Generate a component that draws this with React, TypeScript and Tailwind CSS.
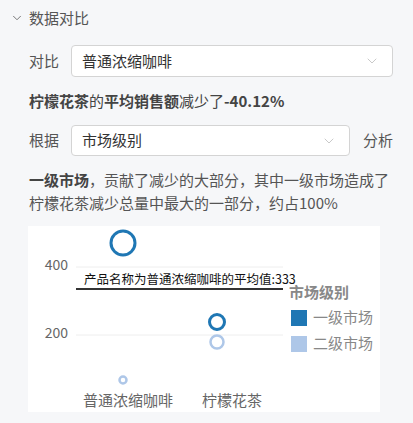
import { ChevronDown } from 'lucide-react';

const DARK = '#1f77b4';
const LIGHT = '#aec7e8';

function Select({ value, className }: { value: string; className: string }) {
  return (
    <div
      className={`flex items-center justify-between rounded-[4px] border border-[#d4d4d4] bg-white pl-[10px] pr-[12px] ${className}`}
    >
      <span className="text-[15px] text-[#333]">{value}</span>
      <ChevronDown size={16} strokeWidth={1.2} className="text-[#bbb]" />
    </div>
  );
}

function Chart() {
  return (
    <div className="ml-[-1px] mt-[12px] h-[186px] w-[352px] bg-white">
      <svg width="352" height="186" className="block">
        <g fontSize="14" fill="#666" textAnchor="end">
          <text x="40" y="44">400</text>
          <text x="40" y="112">200</text>
        </g>
        <line x1="48" x2="255" y1="41" y2="41" stroke="#eee" />
        <line x1="48" x2="255" y1="109" y2="109" stroke="#eee" />

        <circle cx="95" cy="17" r="12" fill="none" stroke={DARK} strokeWidth="3" />
        <circle cx="95" cy="154" r="3.5" fill="none" stroke={LIGHT} strokeWidth="2.5" />
        <circle cx="189" cy="96" r="7.5" fill="none" stroke={DARK} strokeWidth="3" />
        <circle cx="189" cy="116" r="6.5" fill="none" stroke={LIGHT} strokeWidth="2.5" />

        <line x1="48" x2="255" y1="63" y2="63" stroke="#333" strokeWidth="2" />
        <text x="56" y="58" fontSize="12.5" fill="#111">
          产品名称为普通浓缩咖啡的平均值:333
        </text>

        <text x="261" y="72" fontSize="15" fontWeight="bold" fill="#888">
          市场级别
        </text>
        <rect x="263" y="84" width="16" height="16" fill={DARK} />
        <text x="285" y="97" fontSize="15" fill="#888">一级市场</text>
        <rect x="263" y="110" width="16" height="16" fill={LIGHT} />
        <text x="285" y="123" fontSize="15" fill="#888">二级市场</text>

        <g fontSize="15" fill="#666" textAnchor="middle">
          <text x="100" y="180">普通浓缩咖啡</text>
          <text x="204" y="180">柠檬花茶</text>
        </g>
      </svg>
    </div>
  );
}

export default function App() {
  return (
    <div className="h-[423px] w-[413px] overflow-hidden bg-[#f6f7f9] font-['Noto_Sans_CJK_SC',sans-serif] text-[#555]">
      <header className="mt-[8px] flex h-[20px] items-center gap-[5px] pl-[10px]">
        <ChevronDown size={14} strokeWidth={1.5} className="text-[#666]" />
        <span className="text-[15px]">数据对比</span>
      </header>

      <div className="pl-[29px]">
        <div className="mt-[17px] flex items-center">
          <span className="w-[42px] text-[15px]">对比</span>
          <Select value="普通浓缩咖啡" className="h-[32px] w-[322px]" />
        </div>

        <p className="mt-[13px] text-[15px] leading-[22px] text-[#444]">
          <b>柠檬花茶</b>的<b>平均销售额</b>减少了<b>-40.12%</b>
        </p>

        <div className="mt-[13px] flex items-center">
          <span className="w-[42px] text-[15px]">根据</span>
          <Select value="市场级别" className="h-[31px] w-[279px]" />
          <span className="ml-[13px] text-[15px]">分析</span>
        </div>

        <p className="mt-[12px] w-[364px] text-[15px] leading-[23px]">
          <b className="text-[#444]">一级市场</b>，贡献了减少的大部分，其中一级市场造成了柠檬花茶减少总量中最大的一部分，约占100%
        </p>

        <Chart />
      </div>
    </div>
  );
}
